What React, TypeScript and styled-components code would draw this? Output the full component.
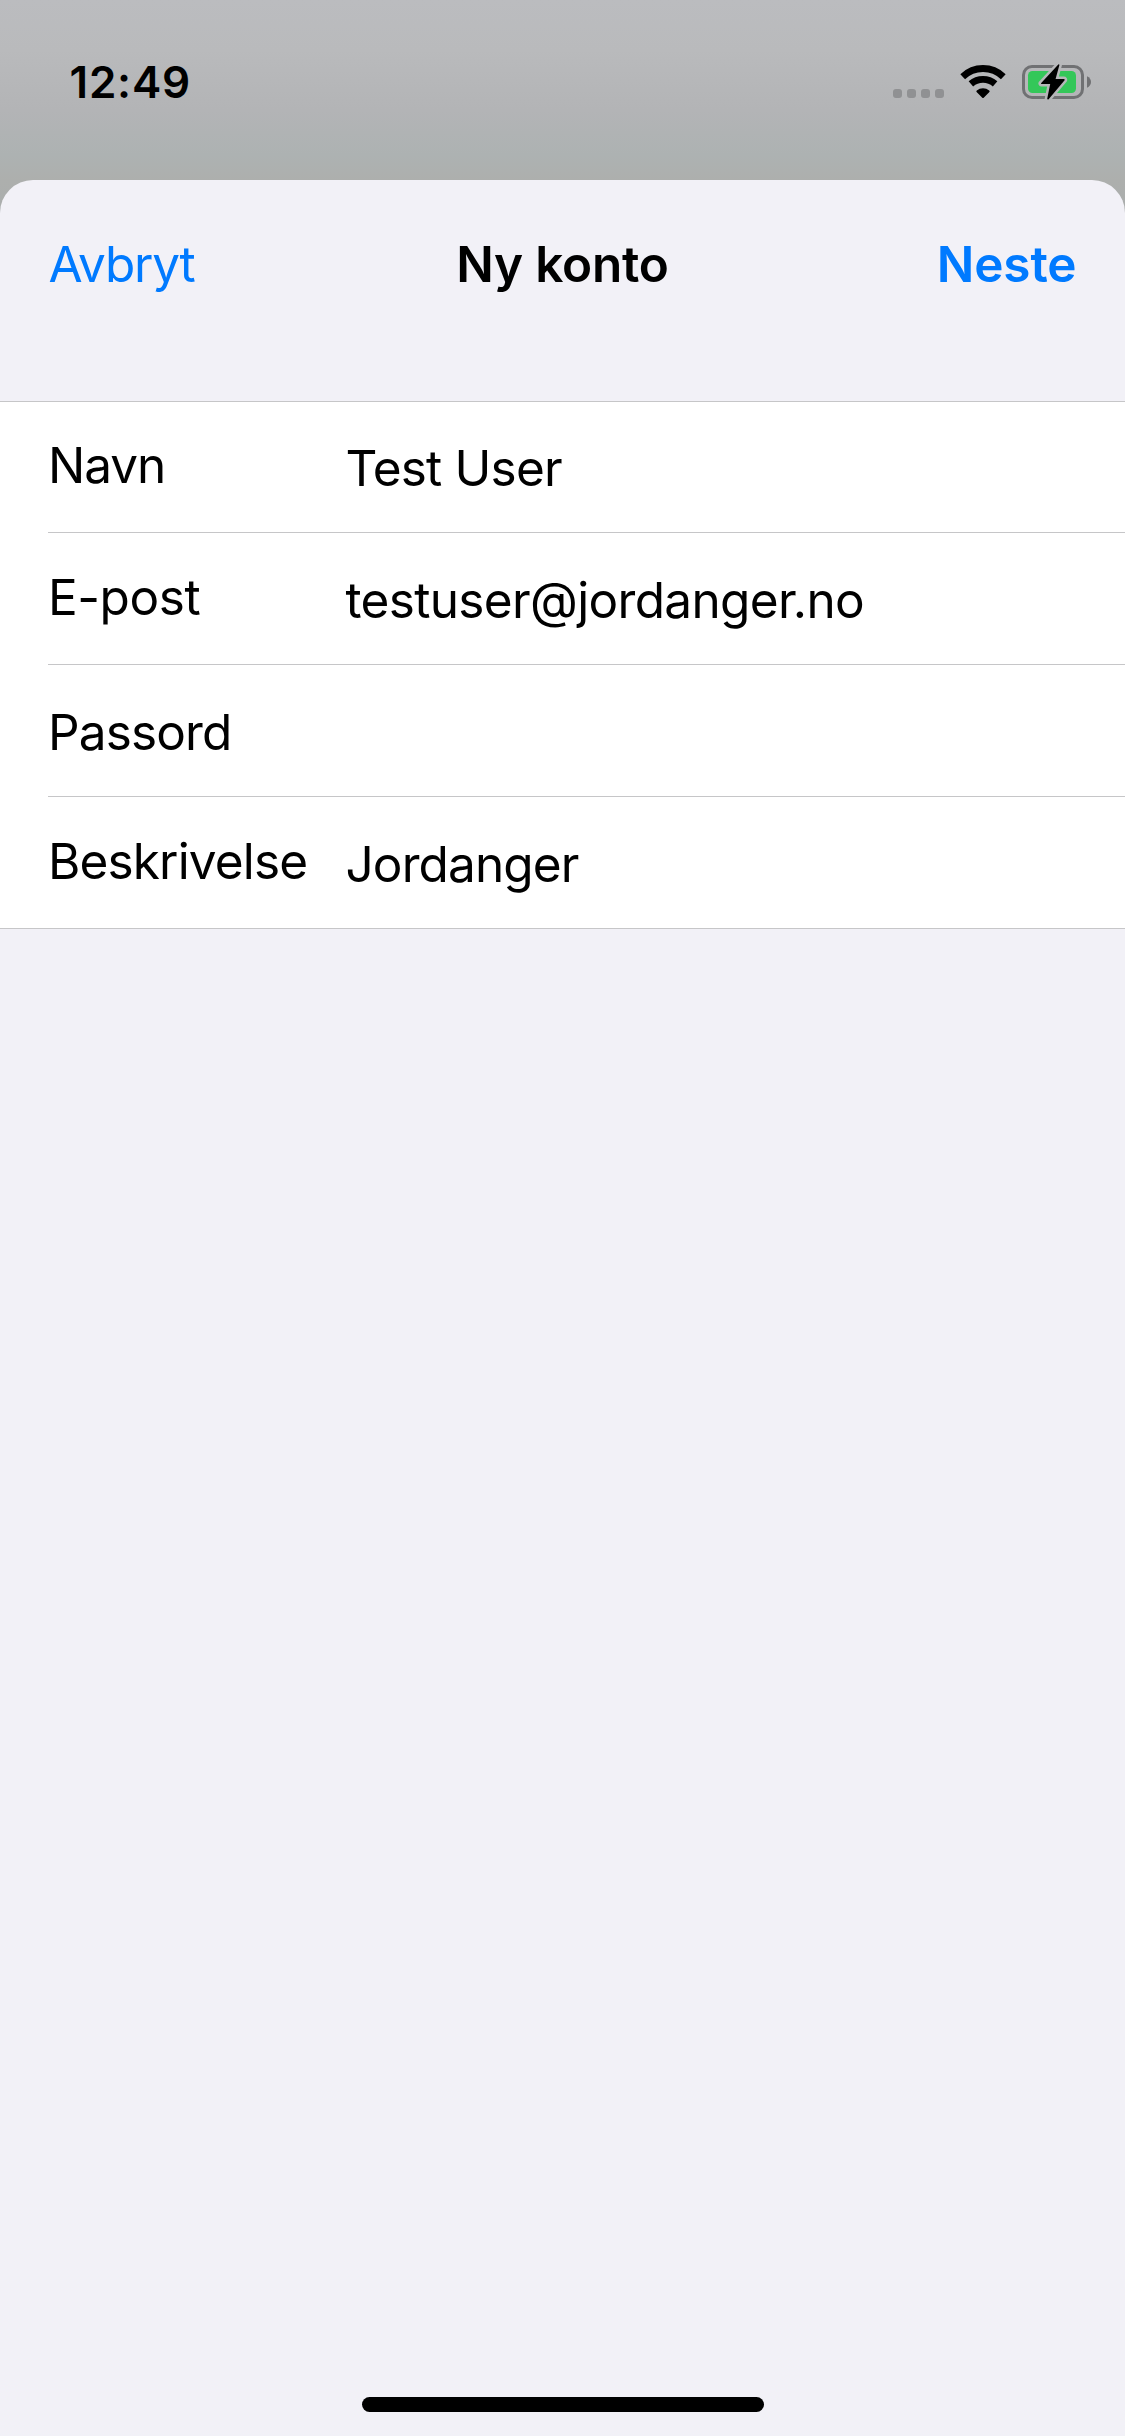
import React from 'react';
import styled, { createGlobalStyle } from 'styled-components';

const GlobalStyle = createGlobalStyle`
  *, *::before, *::after { box-sizing: border-box; }
  body {
    margin: 0;
    color: #000;
    background: #f2f1f7;
    font-family: Inter, "Liberation Sans", sans-serif;
  }
`;

const Screen = styled.div`
  display: flex;
  flex-direction: column;
  width: 1125px;
  height: 2436px;
  overflow: hidden;
  background: linear-gradient(
    #bbbcbf 0,
    #b9babc 50px,
    #b3b4b6 110px,
    #adb2b2 155px,
    #adafad 180px,
    #a9adad 230px
  );
`;

const StatusBar = styled.header`
  display: flex;
  justify-content: space-between;
  flex: none;
  height: 180px;
  padding: 52px 34px 0 69.5px;
`;

const Clock = styled.time`
  font-size: 44px;
  font-weight: 600;
  line-height: 60px;
  letter-spacing: 0.8px;
`;

const StatusIcons = styled.div`
  display: flex;
  align-items: flex-start;
  padding-top: 12px;
`;

const SignalDots = styled.div`
  display: flex;
  gap: 5px;
  margin: 25px 16px 0 0;
`;

const Dot = styled.span`
  flex: none;
  width: 9px;
  height: 9px;
  border-radius: 3px;
  background: #909193;
`;

const WifiIcon = styled.svg`
  width: 46px;
  height: 36px;
  margin-right: 16px;
`;

const BatteryIcon = styled.svg`
  width: 69px;
  height: 37px;
`;

const Sheet = styled.section`
  display: flex;
  flex-direction: column;
  flex: 1;
  border-radius: 33px 33px 0 0;
  background: #f2f1f7;
`;

const NavBar = styled.nav`
  display: grid;
  grid-template-columns: 1fr auto 1fr;
  align-items: start;
  flex: none;
  height: 221px;
  padding: 54px 48px 0;
`;

const NavButton = styled.button<{ $strong?: boolean }>`
  justify-self: ${p => (p.$strong ? 'end' : 'start')};
  margin: 0;
  padding: ${p => (p.$strong ? '0 0.5px 0 0' : '0 0 0 0.5px')};
  border: 0;
  background: none;
  color: #007aff;
  font-family: inherit;
  font-size: 49.5px;
  font-weight: ${p => (p.$strong ? 600 : 400)};
  line-height: 60px;
  letter-spacing: ${p => (p.$strong ? '-0.1px' : '-1.2px')};
`;

const Title = styled.h1`
  margin: 0;
  font-size: 49.5px;
  font-weight: 600;
  line-height: 60px;
  letter-spacing: -0.21px;
`;

const Form = styled.div`
  flex: none;
  border: solid #c6c6c8;
  border-width: 1px 0;
  background: #fff;
`;

const Row = styled.div<{ $height: number }>`
  display: grid;
  grid-template-columns: 297.5px 1fr;
  align-items: start;
  height: ${p => p.$height}px;
  margin-left: 48px;

  & + & {
    border-top: 1px solid #c6c6c8;
  }
`;

const Label = styled.span<{ $top: number; $spacing: number }>`
  padding-top: ${p => p.$top}px;
  font-size: 49.5px;
  line-height: 60px;
  letter-spacing: ${p => p.$spacing}px;
  white-space: nowrap;
`;

const Value = styled(Label)``;

const HomeIndicator = styled.div`
  width: 402px;
  height: 15px;
  margin: auto auto 24px 362px;
  border-radius: 8px;
  background: #000;
`;

interface Field {
  label: string;
  labelTop: number;
  labelSpacing: number;
  value: string;
  valueTop: number;
  valueSpacing: number;
  height: number;
}

const fields: Field[] = [
  { label: 'Navn', labelTop: 33, labelSpacing: -1.1, value: 'Test User', valueTop: 36, valueSpacing: -0.82, height: 130 },
  { label: 'E-post', labelTop: 34, labelSpacing: -0.45, value: 'testuser@jordanger.no', valueTop: 37, valueSpacing: -0.66, height: 132 },
  { label: 'Passord', labelTop: 37, labelSpacing: -0.85, value: '', valueTop: 37, valueSpacing: 0, height: 132 },
  { label: 'Beskrivelse', labelTop: 34, labelSpacing: -0.86, value: 'Jordanger', valueTop: 37, valueSpacing: -0.88, height: 132 },
];

const BOLT = 'M38.3 4.6 L21 23.2 Q20.6 24 21.6 24 H30.2 L27.2 38.8 Q27.6 39.9 28.6 39.2 L44.6 20.2 Q45 19 43.8 19 H35.6 L39.4 5 Q39.2 3.9 38.3 4.6 Z';

function Wifi() {
  return (
    <WifiIcon viewBox="0 0 46 36">
      <g fill="none" stroke="#000" strokeWidth="6.8">
        <path d="M2.7 12.7 A29.2 29.2 0 0 1 43.3 12.7" />
        <path d="M10.9 19.9 A18.3 18.3 0 0 1 35.1 19.9" />
      </g>
      <path d="M22.3 33.7 L16.6 28 Q15.9 27.2 16.8 26.4 A9.8 9.8 0 0 1 29.2 26.4 Q30.1 27.2 29.4 28 L23.7 33.7 Q23 34.4 22.3 33.7 Z" />
    </WifiIcon>
  );
}

function Battery() {
  return (
    <BatteryIcon viewBox="2 4 69 37">
      <mask id="bolt-gap" maskUnits="userSpaceOnUse" x="0" y="0" width="75" height="45">
        <rect width="75" height="45" fill="#fff" />
        <path d={BOLT} fill="#000" stroke="#000" strokeWidth="5" strokeLinejoin="round" />
      </mask>
      <g mask="url(#bolt-gap)">
        <rect x="3.5" y="6.5" width="59" height="31" rx="8.5" fill="none" stroke="#707173" strokeWidth="3" />
        <rect x="8" y="11" width="48" height="22" rx="4.5" fill="#34c759" />
      </g>
      <path d="M67 16.2 Q71 18.2 71 22 T67 27.8 Z" fill="#707173" />
      <path d={BOLT} />
    </BatteryIcon>
  );
}

export default function App() {
  return (
    <>
      <GlobalStyle />
      <Screen>
        <StatusBar>
          <Clock>12:49</Clock>
          <StatusIcons>
            <SignalDots>
              {[0, 1, 2, 3].map(i => (
                <Dot key={i} />
              ))}
            </SignalDots>
            <Wifi />
            <Battery />
          </StatusIcons>
        </StatusBar>
        <Sheet>
          <NavBar>
            <NavButton>Avbryt</NavButton>
            <Title>Ny konto</Title>
            <NavButton $strong>Neste</NavButton>
          </NavBar>
          <Form>
            {fields.map(f => (
              <Row key={f.label} $height={f.height}>
                <Label $top={f.labelTop} $spacing={f.labelSpacing}>{f.label}</Label>
                {f.value && <Value $top={f.valueTop} $spacing={f.valueSpacing}>{f.value}</Value>}
              </Row>
            ))}
          </Form>
          <HomeIndicator />
        </Sheet>
      </Screen>
    </>
  );
}
